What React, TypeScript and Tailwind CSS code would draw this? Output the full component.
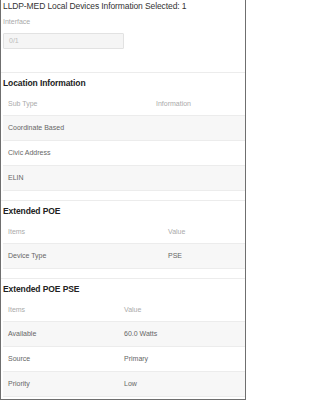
import React from 'react';

interface Column {
  label: string;
  width: string;
}

interface InfoTableProps {
  columns: Column[];
  rows: string[][];
}

const sections: { title: string; columns: Column[]; rows: string[][] }[] = [
  {
    title: "Location Information",
    columns: [
      { label: "Sub Type", width: "w-[148px]" },
      { label: "Information", width: "flex-1" },
    ],
    rows: [["Coordinate Based", ""], ["Civic Address", ""], ["ELIN", ""]],
  },
  {
    title: "Extended POE",
    columns: [
      { label: "Items", width: "w-[160px]" },
      { label: "Value", width: "flex-1" },
    ],
    rows: [["Device Type", "PSE"]],
  },
  {
    title: "Extended POE PSE",
    columns: [
      { label: "Items", width: "w-[116px]" },
      { label: "Value", width: "flex-1" },
    ],
    rows: [["Available", "60.0 Watts"], ["Source", "Primary"], ["Priority", "Low"]],
  },
];

function InfoTable({ columns, rows }: InfoTableProps) {
  return (
    <div className="mt-[4px] w-full">
      {/* header */}
      <div className="flex h-[22px] items-center border-b border-[#ececec] text-[7px] text-[#aaaaaa]">
        {columns.map((col) => (
          <div key={col.label} className={`${col.width} pl-[5px]`}>
            {col.label}
          </div>
        ))}
      </div>
      {rows.map((row, i) => (
        <div
          key={i}
          className={`flex h-[25px] items-center border-b border-[#ececec] text-[7px] text-[#666666] ${
            i % 2 === 0 ? "bg-[#f7f7f7]" : "bg-white"
          }`}
        >
          {row.map((cell, j) => (
            <div key={j} className={`${columns[j].width} pl-[5px]`}>
              {cell}
            </div>
          ))}
        </div>
      ))}
    </div>
  );
}

export default function App() {
  return (
    <div className="h-[400px] w-[246px] overflow-hidden border-x border-b border-[#6f6f6f] bg-white font-['Liberation_Sans',Arial,sans-serif]">
      {/* Top: interface selection */}
      <div className="h-[72px] pl-[2px]">
        <div className="h-[12px] text-[8.5px] leading-[12px] tracking-[-0.1px] text-[#333333]">
          LLDP-MED Local Devices Information Selected: 1
        </div>
        <div className="mt-[4px] h-[12px] text-[7px] leading-[12px] text-[#aaaaaa]">Interface</div>
        <div className="mt-[5px] flex h-[16px] w-[121px] items-center rounded-[1px] border border-[#e2e2e2] bg-[#f5f5f5] pl-[5px] text-[7px] text-[#bdbdbd]">
          0/1
        </div>
      </div>

      {sections.map((s) => (
        <div key={s.title} className="mb-[9px] border-t border-[#ececec] pl-[2px] pt-[3px]">
          <div className="h-[14px] text-[8.5px] font-bold leading-[14px] tracking-[-0.1px] text-[#222222]">
            {s.title}
          </div>
          <InfoTable columns={s.columns} rows={s.rows} />
        </div>
      ))}
    </div>
  );
}
